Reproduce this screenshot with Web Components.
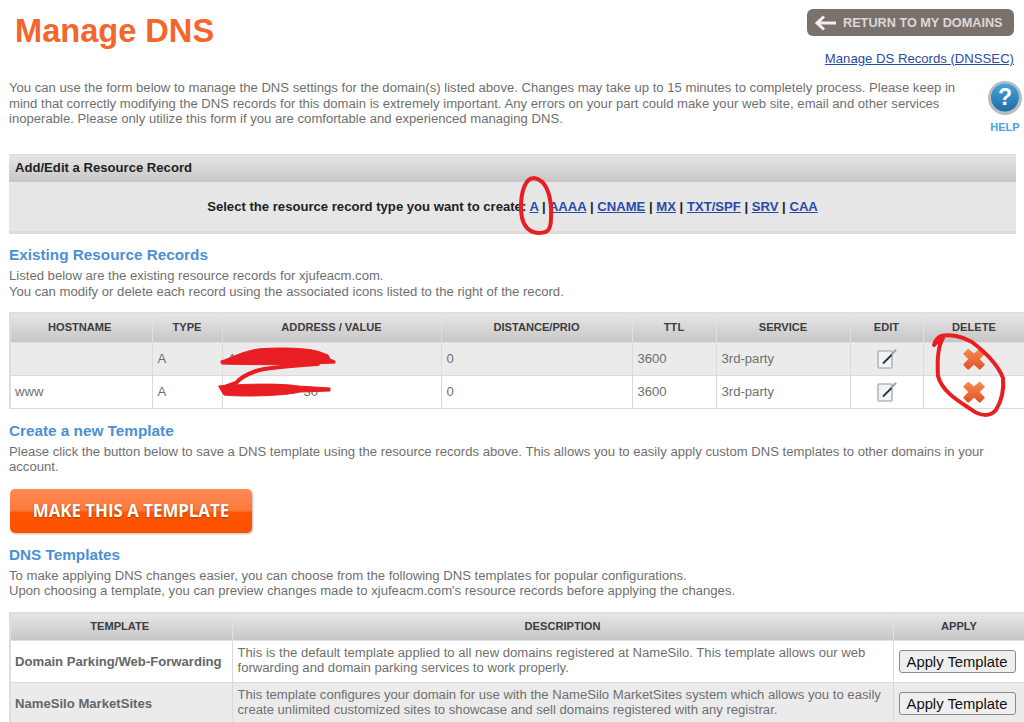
<!DOCTYPE html>
<html lang="en">
<head>
<meta charset="utf-8">
<title>Manage DNS</title>
<style>
  html,body{margin:0;padding:0;background:#fff;overflow:hidden}
  body{width:1024px;height:722px;position:relative;font-family:"Liberation Sans",Arial,sans-serif}
</style>
</head>
<body>
<dns-page></dns-page>

<script>
const SHARED = `
  *,*::before,*::after{box-sizing:border-box}
  :host{box-sizing:border-box}
  a{color:#2a4aa8}
`;
const GRAD = "linear-gradient(#e6e6e6,#c6c6c6)";

class DnsHeader extends HTMLElement {
  constructor() {
    super();
    this.attachShadow({ mode: "open" }).innerHTML = `
      <style>${SHARED}
        :host{display:flex;justify-content:space-between;align-items:flex-start;padding:9px 10px 0 15px;height:80px}
        h1{margin:3px 0 0;font-size:32.6px;line-height:37px;font-weight:700;color:#f4662b}
        .right{display:flex;flex-direction:column;align-items:flex-end;gap:15px}
        .back{display:flex;align-items:center;gap:7px;width:207px;height:27px;padding-left:8px;border-radius:6px;background:#7a716d;
          color:#dcd8d5;font-size:12.7px;font-weight:700;text-decoration:none}
        .link{font-size:13.15px;line-height:15px}
      </style>
      <h1>Manage DNS</h1>
      <div class="right">
        <a class="back" href="#">
          <svg width="21" height="16" viewBox="0 0 21 16"><path d="M21 8H3M9 1.500 2 8l7 6.500" fill="none" stroke="#f1efee" stroke-width="3"/></svg>
          RETURN TO MY DOMAINS
        </a>
        <a class="link" href="#">Manage DS Records (DNSSEC)</a>
      </div>`;
  }
}

class DnsIntro extends HTMLElement {
  constructor() {
    super();
    this.attachShadow({ mode: "open" }).innerHTML = `
      <style>${SHARED}
        :host{display:flex;justify-content:space-between;padding:0 2px 0 9px;height:74px;color:#6f6f6f;font-size:13.12px;line-height:15.500px}
        p{margin:0;width:960px}
        .help{display:flex;flex-direction:column;align-items:center;gap:6px;margin-top:1px;color:#4aa3de;font-size:11px;font-weight:700;line-height:12px}
        text{font-family:"Liberation Sans",Arial,sans-serif}
      </style>
      <p><slot></slot></p>
      <div class="help">
        <svg width="34" height="34" viewBox="0 0 34 34">
          <defs><linearGradient id="h" x1="0" y1="0" x2="0" y2="1"><stop offset="0" stop-color="#46a6d6"/><stop offset="1" stop-color="#1c6ea8"/></linearGradient></defs>
          <circle cx="17" cy="17" r="17" fill="#b9bdbf"/>
          <circle cx="17" cy="16.500" r="14" fill="url(#h)"/>
          <text x="17" y="24" text-anchor="middle" font-size="23" font-weight="700" fill="#fff">?</text>
        </svg>
        HELP
      </div>`;
  }
}

class DnsPanel extends HTMLElement {
  constructor() {
    super();
    this.attachShadow({ mode: "open" }).innerHTML = `
      <style>${SHARED}
        :host{display:block;margin:0 8px 0 9px;height:80px;background:#e6e6e6;border:1px solid #dcdcdc;border-width:1px 0 3px 0}
        .title{height:27px;padding-left:6px;background:${GRAD};color:#222;font-size:13.12px;font-weight:700;line-height:26px}
        .body{padding-top:17px;text-align:center;color:#222;font-size:13.12px;font-weight:700;line-height:16px}
        ::slotted(a){color:#2a4aa8}
      </style>
      <div class="title">${this.getAttribute("heading")}</div>
      <div class="body"><slot></slot></div>`;
  }
}

class DnsSection extends HTMLElement {
  constructor() {
    super();
    this.attachShadow({ mode: "open" }).innerHTML = `
      <style>${SHARED}
        :host{display:block;padding-left:9px;padding-right:8px;color:#6f6f6f;font-size:13.12px;line-height:15.500px}
        h2{margin:0 0 4px;color:#4a90d6;font-size:15.3px;line-height:18px;font-weight:700}
      </style>
      <h2>${this.getAttribute("heading")}</h2>
      <slot></slot>`;
  }
}

class DnsTable extends HTMLElement {
  connectedCallback() {
    const cfg = JSON.parse(this.getAttribute("config"));
    const root = this.shadowRoot || this.attachShadow({ mode: "open" });
    root.innerHTML = `
      <style>${SHARED}
        :host{display:block;margin-left:9px;width:1015px}
        table{border-collapse:collapse;table-layout:fixed;width:100%;color:#6f6f6f;font-size:13.12px}
        th{height:${cfg.head}px;padding:0 0 2px;background:${GRAD};border:1px solid #e0e0e0;border-top:2px solid #dedede;color:#3d3d3d;font-size:11.1px;font-weight:700;text-align:center}
        td{height:${cfg.row}px;padding:0 5px;border:1px solid #dadada;border-left-color:#e2e2e2;line-height:15px}
        tr.alt td{background:#ebebeb}
        td.c{text-align:center;padding:0}
        td.b{font-weight:700;color:#666}
        td.d{padding-bottom:4px}
        td:first-child,th:first-child{border-left:2px solid #dedede}
        td:first-child{padding-left:4px}
        th:first-child{padding-right:3px}
        button{width:117px;height:23px;margin-right:4px;padding:0;border:1px solid #8a8a8a;border-radius:3px;background:#efefef;color:#111;font:14.8px/20px "Liberation Sans",Arial,sans-serif}
        svg{display:block;margin:auto}
        .tail{margin-left:76px}
      </style>
      <table>
        <colgroup>${cfg.cols.map((w) => `<col style="width:${w}px">`).join("")}</colgroup>
        <thead><tr>${cfg.heads.map((h) => `<th>${h}</th>`).join("")}</tr></thead>
        <tbody>${cfg.rows.map((r) => `<tr class="${r.alt ? "alt" : ""}">${r.cells.map((c) => this._cell(c)).join("")}</tr>`).join("")}</tbody>
      </table>`;
  }
  _cell(c) {
    if (c === "@edit") return `<td class="c"><svg width="20" height="20" viewBox="0 0 20 20">
        <defs><filter id="s"><feGaussianBlur stdDeviation=".4"/></filter></defs>
        <rect x="1" y="2" width="14" height="17" rx="1" fill="#eff3fa" stroke="#b4b6b9" stroke-width="1.600"/>
        <path d="M14 6 19 .8" stroke="#a5a5a5" stroke-width="2.200" filter="url(#s)"/>
        <path d="M6 14.500 14.500 6" stroke="#303030" stroke-width="1.800" filter="url(#s)"/>
      </svg></td>`;
    if (c === "@del") return `<td class="c"><svg width="22" height="22" viewBox="0 0 23 23">
        <defs><linearGradient id="x" x1="0" y1="0" x2="0" y2="1"><stop offset="0" stop-color="#f58a4c"/><stop offset="1" stop-color="#e0532a"/></linearGradient></defs>
        <path d="M5.500 1.500 11.500 6.500 17.500 1.500 22 6 16.500 11.500 22 17.500 17.500 22 11.500 16.500 5.500 22 1 17.500 6.500 11.500 1 6Z" fill="url(#x)" stroke="url(#x)" stroke-width="1.500" stroke-linejoin="round"/>
      </svg></td>`;
    if (c === "@apply") return `<td class="c"><button type="button">Apply Template</button></td>`;
    if (c && c.b) return `<td class="b">${c.b}</td>`;
    if (c && c.d) return `<td class="d">${c.d}</td>`;
    if (c && c.tail) return `<td><span class="tail">${c.tail}</span></td>`;
    return `<td>${c}</td>`;
  }
}

class DnsCta extends HTMLElement {
  constructor() {
    super();
    this.attachShadow({ mode: "open" }).innerHTML = `
      <style>${SHARED}
        :host{display:block;margin-left:10px;width:242px}
        a{display:block;height:44px;border-radius:5px;background:linear-gradient(#ff8a55 0,#fb7a3e 48%,#ff5500 54%,#fb5200 100%);box-shadow:1px 1px 2px #bbb;
          color:#fff;font:700 16.85px/43px "Open Sans",sans-serif;text-align:center;text-decoration:none;text-shadow:0 1px 2px #a33c00}
      </style>
      <a href="#"><slot></slot></a>`;
  }
}

class DnsScribbles extends HTMLElement {
  constructor() {
    super();
    this.attachShadow({ mode: "open" }).innerHTML = `
      <style>
        :host{position:absolute;left:0;top:0;width:1024px;height:722px;pointer-events:none}
        path{fill:none;stroke:#e81e22;stroke-linecap:round;stroke-linejoin:round}
        path.blob{fill:#e81e22;stroke-width:1}
      </style>
      <svg width="1024" height="722" viewBox="0 0 1024 722">
        <path stroke-width="4" d="M534 178C526 178 521 190 521 207C521 224 527 232 538 233C546 233 551 232 551 218C552 200 548 180 534 178"/>
        <path class="blob" d="M221 361C232 358 240 352 258 349C280 347 310 348 320 352L328 355 330 359 335 361 335 363C300 365 250 365 222 364Z"/>
        <path stroke-width="4" d="M318 364C290 366 268 367 256 371C245 375 240 378 236 383L222 388"/>
        <path class="blob" d="M219 386C240 384 280 383 298 386L330 388 330 391 300 392C285 396 240 397 224 395L222 392Z"/>
        <path stroke-width="4" d="M934 345C938 340 943 338 943 338C938 346 937 360 938 376C942 392 960 402 972 410C980 416 990 417 996 410C1002 400 1004 388 1003 378C998 365 985 352 972 342C962 336 950 334 941 336C937 338 935 341 934 345"/>
      </svg>`;
  }
}

class DnsPage extends HTMLElement {
  constructor() {
    super();
    const recs = {
      head: 29, row: 33,
      cols: [142, 70, 219, 191, 84, 134, 73, 102],
      heads: ["HOSTNAME", "TYPE", "ADDRESS / VALUE", "DISTANCE/PRIO", "TTL", "SERVICE", "EDIT", "DELETE"],
      rows: [
        { alt: true, cells: ["", "A", "4", "0", "3600", "3rd-party", "@edit", "@del"] },
        { cells: ["www", "A", { tail: "30" }, "0", "3600", "3rd-party", "@edit", "@del"] },
      ],
    };
    const tpls = {
      head: 28, row: 42,
      cols: [222, 661, 132],
      heads: ["TEMPLATE", "DESCRIPTION", "APPLY"],
      rows: [
        { cells: [{ b: "Domain Parking/Web-Forwarding" }, { d: "This is the default template applied to all new domains registered at NameSilo. This template allows our web forwarding and domain parking services to work properly." }, "@apply"] },
        { alt: true, cells: [{ b: "NameSilo MarketSites" }, { d: "This template configures your domain for use with the NameSilo MarketSites system which allows you to easily create unlimited customized sites to showcase and sell domains registered with any registrar." }, "@apply"] },
      ],
    };
    const q = (o) => JSON.stringify(o).replace(/"/g, "&quot;");
    this.attachShadow({ mode: "open" }).innerHTML = `
      <style>:host{display:block;width:1024px}</style>
      <dns-header></dns-header>
      <dns-intro>You can use the form below to manage the DNS settings for the domain(s) listed above. Changes may take up to 15 minutes to completely process. Please keep in mind that correctly modifying the DNS records for this domain is extremely important. Any errors on your part could make your web site, email and other services inoperable. Please only utilize this form if you are comfortable and experienced managing DNS.</dns-intro>
      <dns-panel heading="Add/Edit a Resource Record">Select the resource record type you want to create: <a href="#">A</a> | <a href="#">AAAA</a> | <a href="#">CNAME</a> | <a href="#">MX</a> | <a href="#">TXT/SPF</a> | <a href="#">SRV</a> | <a href="#">CAA</a></dns-panel>
      <dns-section heading="Existing Resource Records" style="margin-top:12px;height:66px">Listed below are the existing resource records for xjufeacm.com.<br>You can modify or delete each record using the associated icons listed to the right of the record.</dns-section>
      <dns-table config="${q(recs)}"></dns-table>
      <dns-section heading="Create a new Template" style="margin-top:13px;height:58px">Please click the button below to save a DNS template using the resource records above. This allows you to easily apply custom DNS templates to other domains in your account.</dns-section>
      <dns-cta style="margin-top:9px">MAKE THIS A TEMPLATE</dns-cta>
      <dns-section heading="DNS Templates" style="margin-top:13px;height:66px">To make applying DNS changes easier, you can choose from the following DNS templates for popular configurations.<br>Upon choosing a template, you can preview changes made to xjufeacm.com's resource records before applying the changes.</dns-section>
      <dns-table config="${q(tpls)}"></dns-table>
      <dns-scribbles></dns-scribbles>`;
  }
}

customElements.define("dns-header", DnsHeader);
customElements.define("dns-intro", DnsIntro);
customElements.define("dns-panel", DnsPanel);
customElements.define("dns-section", DnsSection);
customElements.define("dns-table", DnsTable);
customElements.define("dns-cta", DnsCta);
customElements.define("dns-scribbles", DnsScribbles);
customElements.define("dns-page", DnsPage);
</script>
</body>
</html>
